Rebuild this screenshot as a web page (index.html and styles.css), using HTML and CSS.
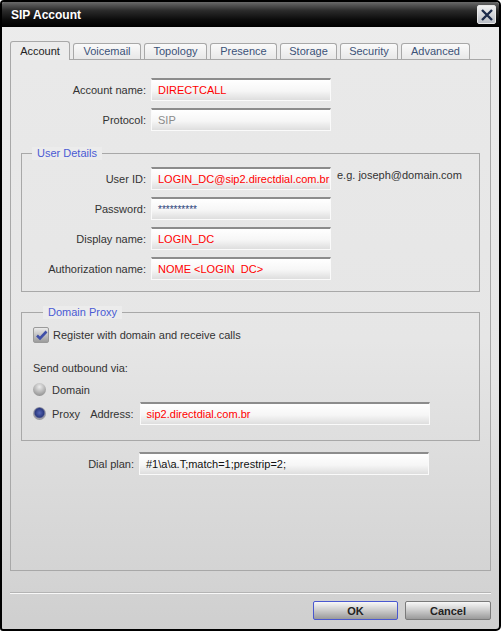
FILE: index.html
```html
<!DOCTYPE html>
<html lang="en">
<head>
    <meta charset="UTF-8">
    <title>SIP Account</title>
    <link rel="stylesheet" href="styles.css">
</head>
<body>
    <div class="window">
        <div class="titlebar">
            <span class="title">SIP Account</span>
            <span class="close">
                <svg width="14" height="12" viewBox="0 0 14 12">
                    <path d="M2 1 L12 11 M12 1 L2 11" stroke="#1b2a4a" stroke-width="2.4"/>
                </svg>
            </span>
        </div>

        <div class="content">
            <div class="tabs">
                <div class="tab active">Account</div>
                <div class="tab w-voicemail">Voicemail</div>
                <div class="tab w-topology">Topology</div>
                <div class="tab w-presence">Presence</div>
                <div class="tab w-storage">Storage</div>
                <div class="tab w-security">Security</div>
                <div class="tab w-advanced">Advanced</div>
            </div>

            <div class="panel">
                <div class="row top">
                    <label class="lbl">Account name:</label>
                    <div class="field"><span class="val">DIRECTCALL</span></div>
                </div>
                <div class="row top">
                    <label class="lbl">Protocol:</label>
                    <div class="field"><span class="val muted">SIP</span></div>
                </div>

                <fieldset class="group user">
                    <legend>User Details</legend>
                    <div class="row">
                        <label class="lbl">User ID:</label>
                        <div class="field"><span class="val">LOGIN_DC@sip2.directdial.com.br</span></div>
                        <span class="hint">e.g. joseph@domain.com</span>
                    </div>
                    <div class="row">
                        <label class="lbl">Password:</label>
                        <div class="field"><span class="val pass">**********</span></div>
                    </div>
                    <div class="row">
                        <label class="lbl">Display name:</label>
                        <div class="field"><span class="val">LOGIN_DC</span></div>
                    </div>
                    <div class="row last">
                        <label class="lbl">Authorization name:</label>
                        <div class="field"><span class="val">NOME &lt;LOGIN&nbsp; DC&gt;</span></div>
                    </div>
                </fieldset>

                <fieldset class="group proxy">
                    <legend>Domain Proxy</legend>
                    <div class="check-row">
                        <span class="checkbox">
                            <svg width="13" height="11" viewBox="0 0 13 11">
                                <path d="M2 5.5 L5 8.5 L11.5 1.5" stroke="#3f4fa8" stroke-width="2.6" fill="none"/>
                            </svg>
                        </span>
                        <span>Register with domain and receive calls</span>
                    </div>
                    <div class="send-label">Send outbound via:</div>
                    <div class="radio-row">
                        <span class="radio"></span>
                        <span>Domain</span>
                    </div>
                    <div class="radio-row">
                        <span class="radio on"></span>
                        <span>Proxy</span>
                        <span class="addr-lbl">Address:</span>
                        <div class="field wide"><span class="val">sip2.directdial.com.br</span></div>
                    </div>
                </fieldset>

                <div class="row dial">
                    <label class="lbl">Dial plan:</label>
                    <div class="field wide"><span class="val dark">#1\a\a.T;match=1;prestrip=2;</span></div>
                </div>
            </div>

            <div class="footer">
                <button class="btn default">OK</button>
                <button class="btn">Cancel</button>
            </div>
        </div>
    </div>
</body>
</html>
```

FILE: styles.css
```css
body {
    margin: 0;
    background-color: #fff;
    font-family: "Liberation Sans", Arial, sans-serif;
    font-size: 11px;
    color: #333;
}

.window {
    width: 501px;
    height: 631px;
    box-sizing: border-box;
    border: 2px solid #000;
    border-radius: 4px 5px 5px 3px;
    background: linear-gradient(#ececec, #e6e6e6 60%, #cfcfcf);
    overflow: hidden;
}

.titlebar {
    height: 25px;
    display: flex;
    align-items: center;
    justify-content: space-between;
    padding: 0 3px 0 9px;
    background: linear-gradient(#6a6a6a, #2a2a2a 35%, #0c0c0c 70%, #000);
}

.title {
    color: #fff;
    font-weight: bold;
    font-size: 12px;
}

.close {
    width: 17px;
    height: 17px;
    border: 1px solid #e8e8e8;
    border-radius: 2px;
    background: linear-gradient(#f0f0f0, #b8bcc4);
    display: flex;
    align-items: center;
    justify-content: center;
}

.content {
    padding: 15px 8px 0 8px;
}

/* tabs */
.tabs {
    display: flex;
    align-items: flex-end;
    gap: 3px;
    height: 17px;
}

.tab {
    height: 15px;
    line-height: 15px;
    border: 1px solid #a8a8a8;
    border-bottom: none;
    border-radius: 3px 3px 0 0;
    background: linear-gradient(#fafafa, #e8e8e8);
    text-align: center;
    color: #3b5278;
    font-size: 11px;
}

.tab.active {
    width: 58px;
    height: 18px;
    line-height: 18px;
    margin-bottom: -1px;
    color: #222;
    background: #ececec;
    position: relative;
    z-index: 1;
}

.w-voicemail { width: 66px; }
.w-topology { width: 61px; }
.w-presence { width: 65px; }
.w-storage { width: 55px; }
.w-security { width: 56px; }
.w-advanced { width: 67px; }

.panel {
    height: 512px;
    border: 1px solid #a8a8a8;
    background: linear-gradient(#e9e9e9, #e6e6e6 55%, #d4d4d4);
    padding: 18px 10px 0 10px;
    box-sizing: border-box;
    width: 481px;
}

/* form rows */
.row {
    display: flex;
    align-items: center;
    margin-bottom: 7px;
}

.row.last {
    margin-bottom: 0;
}

.lbl {
    width: 125px;
    text-align: right;
    margin-right: 5px;
    color: #333;
}

.group .lbl {
    width: 124px;
}

.field {
    width: 180px;
    height: 23px;
    box-sizing: border-box;
    border: 1px solid #fafafa;
    border-top: 2px solid #8c8c8c;
    background: linear-gradient(#ffffff, #f6f6f6 55%, #dedede);
    display: flex;
    align-items: center;
    padding-left: 6px;
}

.field.wide {
    width: 290px;
}

.val {
    color: #f00;
    font-size: 11px;
}

.val.muted {
    color: #8a8a8a;
}

.val.dark {
    color: #111;
}

.val.pass {
    color: #2a3f7a;
    font-size: 10px;
}

.hint {
    margin-left: 6px;
    align-self: flex-start;
    margin-top: 2px;
}

/* group boxes */
.group {
    border: 1px solid #a8a8a8;
    margin: 16px 0 0 0;
    padding: 7px 0 11px 0;
}

.group legend {
    color: #4a5bd4;
    padding: 0 5px;
    margin-left: 10px;
    line-height: 13px;
    background: #ececec;
}

.group.proxy {
    margin-top: 14px;
    padding: 8px 0 15px 11px;
}

.check-row {
    display: flex;
    align-items: center;
    gap: 4px;
    height: 16px;
}

.checkbox {
    width: 14px;
    height: 14px;
    border: 1px solid #9a9a9a;
    border-radius: 2px;
    background: linear-gradient(#eaeaea, #9c9c9c);
    display: flex;
    align-items: center;
    justify-content: center;
}

.send-label {
    margin-top: 19px;
    height: 13px;
}

.radio-row {
    display: flex;
    align-items: center;
    gap: 6px;
    margin-top: 8px;
}

.radio-row + .radio-row {
    margin-top: 6px;
}

.radio {
    width: 13px;
    height: 13px;
    border-radius: 50%;
    background: radial-gradient(circle at 50% 30%, #ececec, #b4b4b4 50%, #7c7c7c);
}

.radio.on {
    background: radial-gradient(circle at 50% 45%, #5868b8, #2c3a80 45%, #a0a0a8 60%, #7c7c7c);
}

.addr-lbl {
    margin-left: 4px;
}

.dial {
    margin-top: 11px;
}

.dial .lbl {
    width: 113px;
}

/* dialog buttons */
.footer {
    margin-top: 21px;
    border-top: 1px solid #b4b4b4;
    box-shadow: inset 0 1px 0 #f8f8f8;
    padding-top: 8px;
    display: flex;
    justify-content: flex-end;
    gap: 7px;
}

.btn {
    width: 86px;
    height: 19px;
    padding: 0;
    border: 1px solid #7a7a7a;
    border-radius: 2px;
    background: linear-gradient(#f8f8f8, #d0d0d0 45%, #9a9a9a);
    font-family: "Liberation Sans", Arial, sans-serif;
    font-size: 11px;
    font-weight: bold;
    color: #222;
}

.btn.default {
    width: 85px;
    border-color: #4a58d0;
}
```
